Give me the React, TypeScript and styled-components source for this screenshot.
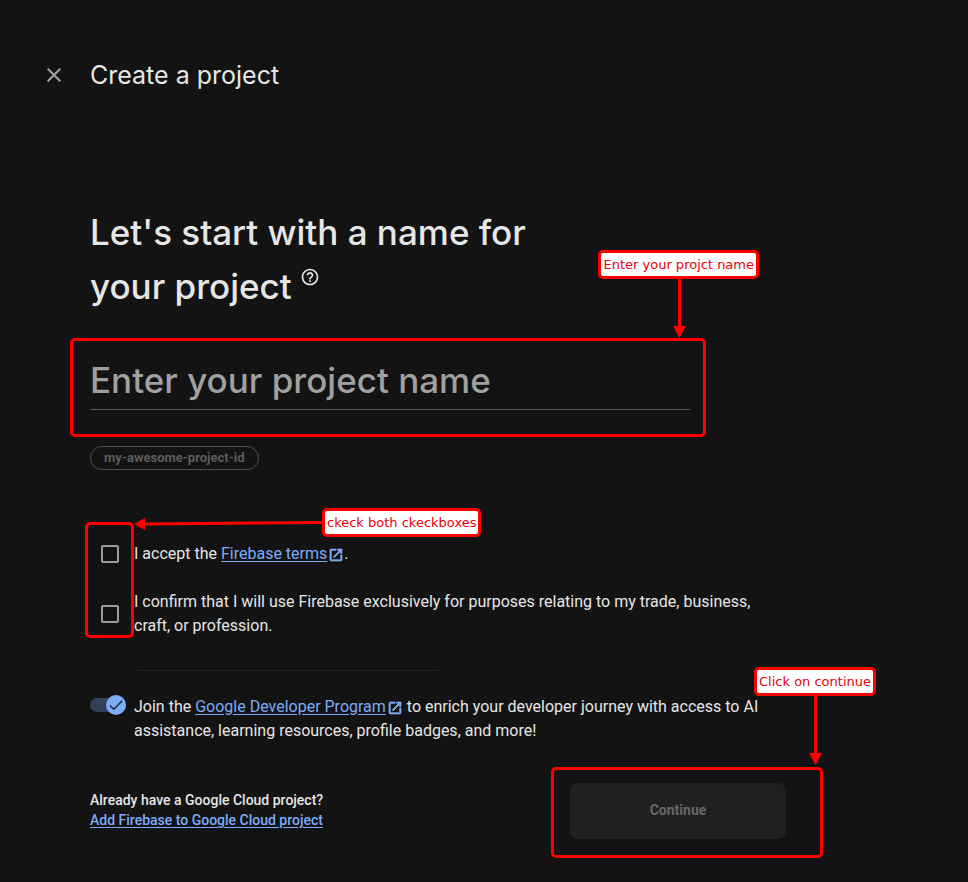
import React, { useState } from "react";
import styled, { createGlobalStyle } from "styled-components";
import { MdCheck, MdClose, MdHelpOutline, MdOpenInNew } from "react-icons/md";

const RED = "#ff0000";
const DISPLAY = '"Google Sans", Inter, "Open Sans", sans-serif';

const GlobalStyle = createGlobalStyle`
  *, *::before, *::after { box-sizing: border-box; }
  body {
    margin: 0;
    background: #131313;
    color: #e6e6e6;
    font: 400 16px/24px Roboto, sans-serif;
  }
`;

const Page = styled.div`
  min-height: 100vh;
  padding: 55px 40px 24px;
`;

const Header = styled.header`
  display: flex;
  align-items: center;
  gap: 22px;
  height: 40px;
`;

const CloseButton = styled.button`
  display: flex;
  width: 28px;
  padding: 2px;
  border: 0;
  background: none;
  color: #a3a3a3;
  font-size: 24px;
  cursor: pointer;
`;

const Title = styled.h1`
  margin: 0;
  font: 400 25px/40px ${DISPLAY};
`;

const Form = styled.form`
  max-width: 746px;
  margin-top: 110px;
  padding-left: 50px;
`;

const Question = styled.h2`
  max-width: 480px;
  margin: 0 0 40px;
  font: 500 35px/54px ${DISPLAY};
`;

const HelpButton = styled.button`
  margin: 0 0 0 8px;
  padding: 0;
  border: 0;
  background: none;
  color: inherit;
  font-size: 20px;
  line-height: 20px;
  vertical-align: 12px;
  cursor: pointer;

  svg { display: block; }
`;

const Field = styled.div`
  position: relative;
  max-width: 600px;
`;

const NameInput = styled.input`
  display: block;
  width: 100%;
  height: 57px;
  padding: 0 0 2px;
  border: 0;
  border-bottom: 1px solid #55585e;
  border-radius: 0;
  outline: 0;
  background: none;
  color: #e6e6e6;
  font: 500 35px/54px ${DISPLAY};

  &::placeholder { color: #a0a0a0; opacity: 1; }
`;

const Chip = styled.button`
  display: block;
  height: 24px;
  margin-top: 36px;
  padding: 0 13px;
  border: 1px solid #4a4d52;
  border-radius: 12px;
  background: none;
  color: #5c5c5c;
  font: 700 13px/20px Roboto, sans-serif;
`;

const Consents = styled.div`
  position: relative;
  display: grid;
  gap: 24px;
  margin-top: 72px;
`;

const Row = styled.div`
  display: grid;
  grid-template-columns: 40px 1fr;
  column-gap: 4px;
  align-items: center;
`;

const Checkbox = styled.input`
  appearance: none;
  justify-self: center;
  width: 18px;
  height: 18px;
  margin: 0;
  border: 2px solid #9e9e9e;
  border-radius: 2px;

  &:checked { background: #7cacf8; border-color: #7cacf8; }
`;

const Link = styled.a`
  color: #7cacf8;
  text-decoration: none;

  span { text-decoration: underline; text-underline-offset: 2px; }
  svg { margin-left: 1px; font-size: 16px; vertical-align: -4px; }
  path:last-child { stroke-width: 1; }
`;

const Divider = styled.hr`
  width: 300px;
  height: 1px;
  margin: 32px 0 23px 48px;
  border: 0;
  background: #262626;
`;

const ProgramRow = styled(Row)`
  align-items: start;

  label { padding-top: 1px; }
`;

const Switch = styled.span`
  position: relative;
  display: flex;
  align-items: center;
  width: 36px;
  height: 22px;
`;

const SwitchInput = styled.input`
  appearance: none;
  width: 36px;
  height: 14px;
  margin: 0;
  border-radius: 7px;
  background: #344058;
`;

const Thumb = styled.span<{ $on: boolean }>`
  position: absolute;
  top: 1px;
  left: ${(p) => (p.$on ? "16px" : "0")};
  display: grid;
  place-items: center;
  width: 20px;
  height: 20px;
  border-radius: 50%;
  background: ${(p) => (p.$on ? "#7cacf8" : "#9e9e9e")};
  color: #1f2c45;
  font-size: 18px;
  pointer-events: none;
`;

const Footer = styled.footer`
  display: flex;
  justify-content: space-between;
  align-items: flex-start;
  margin-top: 40px;
`;

const Existing = styled.p`
  display: grid;
  margin: 7px 0 0;
  font-size: 14px;
  line-height: 20px;
  font-weight: 500;
`;

const Submit = styled.div`
  position: relative;
`;

const ContinueButton = styled.button`
  width: 216px;
  height: 56px;
  padding: 0 0 2px;
  border: 0;
  border-radius: 8px;
  background: #202020;
  color: #666666;
  font: 700 14px/20px Roboto, sans-serif;
`;

const Frame = styled.div<{ $inset: string }>`
  position: absolute;
  inset: ${(p) => p.$inset};
  border: 3px solid ${RED};
  border-radius: 5px;
  pointer-events: none;
`;

const ConsentFrame = styled(Frame)`
  width: 49px;
`;

const Callout = styled.div<{ $inset: string }>`
  position: absolute;
  inset: ${(p) => p.$inset};
  padding: 3px 2px;
  border: 3px solid ${RED};
  border-radius: 5px;
  background: #ffffff;
  color: #e8000d;
  font: 400 13px/17px Verdana, "DejaVu Sans", sans-serif;
  white-space: nowrap;
`;

const ArrowSvg = styled.svg<{ $inset: string }>`
  position: absolute;
  inset: ${(p) => p.$inset};
  fill: ${RED};
  stroke: none;
  pointer-events: none;
`;

function DownArrow({ length, inset }: { length: number; inset: string }) {
  return (
    <ArrowSvg $inset={inset} width={13} height={length} viewBox={`0 0 13 ${length}`} aria-hidden>
      <path d={`M5 0h3v${length - 12}h5L6.500 ${length}L0 ${length - 12}h5z`} />
    </ArrowSvg>
  );
}

function LeftArrow({ inset }: { inset: string }) {
  return (
    <ArrowSvg $inset={inset} width={188} height={12} viewBox="0 0 188 12" aria-hidden>
      <path d="M0 6L11 0v4.500L188 3v3L11 7.500V12z" />
    </ArrowSvg>
  );
}

function ExternalLink({ children }: { children: React.ReactNode }) {
  return (
    <Link href="#">
      <span>{children}</span>
      <MdOpenInNew aria-hidden />
    </Link>
  );
}

export default function App() {
  const [name, setName] = useState("");
  const [joined, setJoined] = useState(true);

  return (
    <>
      <GlobalStyle />
      <Page>
        <Header>
          <CloseButton aria-label="Close"><MdClose /></CloseButton>
          <Title>Create a project</Title>
        </Header>

        <Form onSubmit={(e) => e.preventDefault()}>
          <Question>
            <label htmlFor="project-name">Let's start with a name for your project</label>
            <HelpButton type="button" aria-label="Help"><MdHelpOutline /></HelpButton>
          </Question>

          <Field>
            <NameInput
              id="project-name"
              placeholder="Enter your project name"
              value={name}
              onChange={(e) => setName(e.target.value)}
            />
            <Frame $inset="-15px -16px -27px -20px" />
            <DownArrow length={59} inset="auto 4px 72px auto" />
            <Callout $inset="auto -69px 131px auto">Enter your projct name</Callout>
          </Field>

          <Chip type="button" disabled>my-awesome-project-id</Chip>

          <Consents>
            <Row>
              <Checkbox type="checkbox" id="terms" />
              <label htmlFor="terms">
                I accept the <ExternalLink>Firebase terms</ExternalLink>.
              </label>
            </Row>
            <Row>
              <Checkbox type="checkbox" id="business" />
              <label htmlFor="business">
                I confirm that I will use Firebase exclusively for purposes relating to my trade,
                business, craft, or profession.
              </label>
            </Row>
            <ConsentFrame $inset="-20px auto 0 -5px" />
            <LeftArrow inset="-24px auto auto 44px" />
            <Callout $inset="-34px auto auto 232px">ckeck both ckeckboxes</Callout>
          </Consents>

          <Divider />

          <ProgramRow>
            <Switch>
              <SwitchInput
                type="checkbox"
                role="switch"
                id="program"
                checked={joined}
                onChange={(e) => setJoined(e.target.checked)}
              />
              <Thumb $on={joined}>{joined && <MdCheck />}</Thumb>
            </Switch>
            <label htmlFor="program">
              Join the <ExternalLink>Google Developer Program</ExternalLink> to enrich your
              developer journey with access to AI assistance, learning resources, profile badges,
              and more!
            </label>
          </ProgramRow>

          <Footer>
            <Existing>
              Already have a Google Cloud project?
              <Link href="#"><span>Add Firebase to Google Cloud project</span></Link>
            </Existing>
            <Submit>
              <ContinueButton type="submit" disabled>Continue</ContinueButton>
              <Frame $inset="-16px -37px -19px -19px" />
              <DownArrow length={69} inset="auto -36px 74px auto" />
              <Callout $inset="auto -90px 143px auto">Click on continue</Callout>
            </Submit>
          </Footer>
        </Form>
      </Page>
    </>
  );
}
